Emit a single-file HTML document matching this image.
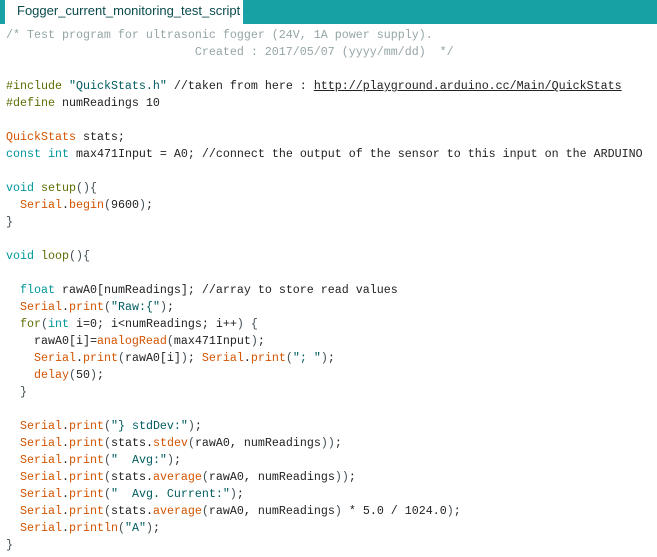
<!DOCTYPE html>
<html><head><meta charset="utf-8"><style>
body{margin:0;width:657px;height:557px;background:#fff;overflow:hidden;position:relative}
.bar{position:absolute;left:0;top:0;width:657px;height:24px;background:#17a1a5}
.tab{position:absolute;left:5px;top:0;width:238px;height:24px;background:#fff;font:13px "Liberation Sans",sans-serif;color:#0a4a4d;line-height:22px;padding-left:12px;box-sizing:border-box}
pre{position:absolute;left:6px;top:27px;margin:0;font:11.67px/17px "Liberation Mono",monospace;color:#222}
.c{color:#95a5a6}.k{color:#00979c}.o{color:#d35400}.g{color:#5e6d03}.s{color:#005c5f}.b{color:#434f54}.u{text-decoration:underline}
</style></head><body>
<div class="bar"></div><div class="tab">Fogger_current_monitoring_test_script</div>
<pre><span class="c">/* Test program for ultrasonic fogger (24V, 1A power supply).
                           Created : 2017/05/07 (yyyy/mm/dd)  */</span>

<span class="g">#include</span> <span class="s">"QuickStats.h"</span> //taken from here : <span class="u">http://playground.arduino.cc/Main/QuickStats</span>
<span class="g">#define</span> numReadings 10

<span class="o">QuickStats</span> stats;
<span class="k">const</span> <span class="k">int</span> max471Input = A0; //connect the output of the sensor to this input on the ARDUINO

<span class="k">void</span> <span class="g">setup</span><span class="b">(){</span>
  <span class="o">Serial</span>.<span class="o">begin</span><span class="b">(</span>9600<span class="b">)</span>;
<span class="b">}</span>

<span class="k">void</span> <span class="g">loop</span><span class="b">(){</span>

  <span class="k">float</span> rawA0[numReadings]; //array to store read values
  <span class="o">Serial</span>.<span class="o">print</span><span class="b">(</span><span class="s">"Raw:{"</span><span class="b">)</span>;
  <span class="g">for</span><span class="b">(</span><span class="k">int</span> i=0; i&lt;numReadings; i++<span class="b">)</span> <span class="b">{</span>
    rawA0[i]=<span class="o">analogRead</span><span class="b">(</span>max471Input<span class="b">)</span>;
    <span class="o">Serial</span>.<span class="o">print</span><span class="b">(</span>rawA0[i]<span class="b">)</span>; <span class="o">Serial</span>.<span class="o">print</span><span class="b">(</span><span class="s">"; "</span><span class="b">)</span>;
    <span class="o">delay</span><span class="b">(</span>50<span class="b">)</span>;
  <span class="b">}</span>

  <span class="o">Serial</span>.<span class="o">print</span><span class="b">(</span><span class="s">"} stdDev:"</span><span class="b">)</span>;
  <span class="o">Serial</span>.<span class="o">print</span><span class="b">(</span>stats.<span class="o">stdev</span><span class="b">(</span>rawA0, numReadings<span class="b">))</span>;
  <span class="o">Serial</span>.<span class="o">print</span><span class="b">(</span><span class="s">"  Avg:"</span><span class="b">)</span>;
  <span class="o">Serial</span>.<span class="o">print</span><span class="b">(</span>stats.<span class="o">average</span><span class="b">(</span>rawA0, numReadings<span class="b">))</span>;
  <span class="o">Serial</span>.<span class="o">print</span><span class="b">(</span><span class="s">"  Avg. Current:"</span><span class="b">)</span>;
  <span class="o">Serial</span>.<span class="o">print</span><span class="b">(</span>stats.<span class="o">average</span><span class="b">(</span>rawA0, numReadings<span class="b">)</span> * 5.0 / 1024.0<span class="b">)</span>;
  <span class="o">Serial</span>.<span class="o">println</span><span class="b">(</span><span class="s">"A"</span><span class="b">)</span>;
<span class="b">}</span></pre>
</body></html>
